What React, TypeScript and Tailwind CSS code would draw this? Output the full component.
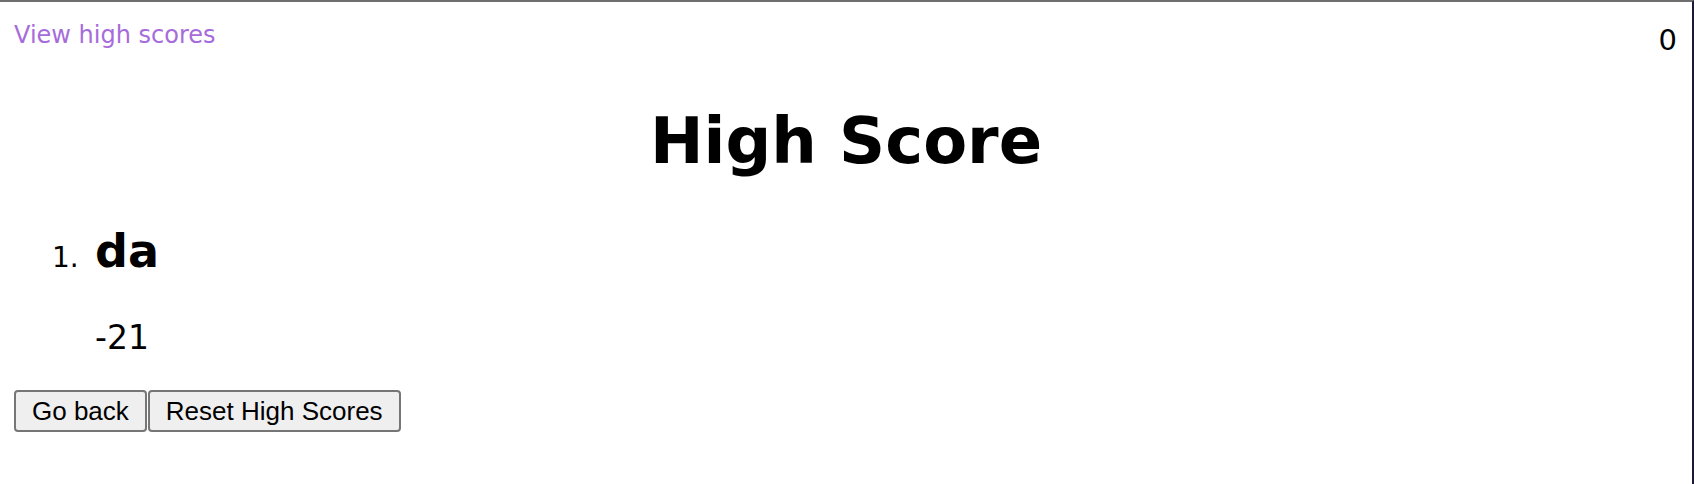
import React from "react"

const App = () => {
    return (
        <div className="min-h-[484px] border-t-2 border-r-2 border-t-[#6e6e6e] border-r-[#1b1937] bg-white text-black font-['DejaVu_Sans',sans-serif]">
            <div className="flex justify-between items-start pl-[14px] pr-[15px] pt-[19px]">
                <a href="#highscores" className="text-[24px] leading-[28px] text-[#a66cdb]">
                    View high scores
                </a>
                <span className="mt-[5px] text-[29px] leading-none">0</span>
            </div>

            <div className="px-[14px]">
                <h1 className="mt-[54px] text-center text-[64px] font-bold leading-none">High Score</h1>

                <ol className="mt-[55px] pl-[38px]">
                    <li className="flex items-baseline">
                        <span className="w-[43px] text-[28px] leading-none">1.</span>
                        <div>
                            <h2 className="text-[46px] font-bold leading-none">da</h2>
                            <p className="mt-[47px] text-[33px] leading-none">-21</p>
                        </div>
                    </li>
                </ol>

                <div className="mt-[36px] flex gap-[1px] font-['Liberation_Sans',Arial,sans-serif]">
                    <button className="rounded-[4px] border-2 border-[#767676] bg-[#efefef] px-[16px] py-[4px] text-[26px] leading-[30px]">
                        Go back
                    </button>
                    <button className="rounded-[4px] border-2 border-[#767676] bg-[#efefef] px-[16px] py-[4px] text-[26px] leading-[30px]">
                        Reset High Scores
                    </button>
                </div>
            </div>
        </div>
    )
}

export default App
